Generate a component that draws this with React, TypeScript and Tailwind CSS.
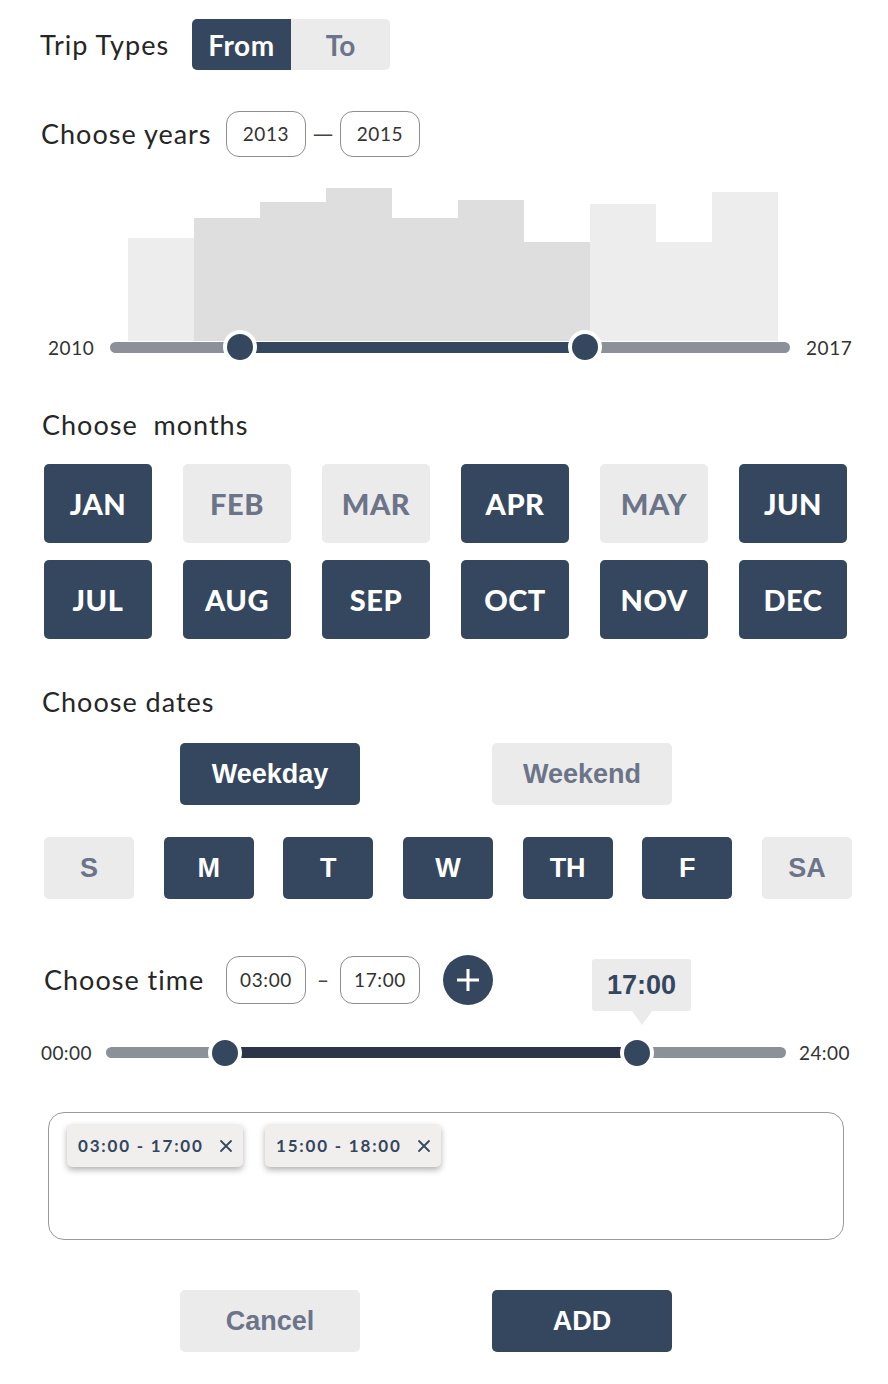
import React from "react";

const DARK = "bg-[#34475e]";

const bars = [
  { h: "h-[103px]", on: false, w: "w-[66px]" },
  { h: "h-[123px]", on: true, w: "w-[66px]" },
  { h: "h-[139px]", on: true, w: "w-[66px]" },
  { h: "h-[153px]", on: true, w: "w-[66px]" },
  { h: "h-[123px]", on: true, w: "w-[66px]" },
  { h: "h-[141px]", on: true, w: "w-[66px]" },
  { h: "h-[99px]", on: true, w: "w-[66px]" },
  { h: "h-[137px]", on: false, w: "w-[66px]" },
  { h: "h-[99px]", on: false, w: "w-[56px]" },
  { h: "h-[149px]", on: false, w: "w-[66px]" },
];

const months = [
  { m: "JAN", on: true },
  { m: "FEB", on: false },
  { m: "MAR", on: false },
  { m: "APR", on: true },
  { m: "MAY", on: false },
  { m: "JUN", on: true },
  { m: "JUL", on: true },
  { m: "AUG", on: true },
  { m: "SEP", on: true },
  { m: "OCT", on: true },
  { m: "NOV", on: true },
  { m: "DEC", on: true },
];

const days = [
  { d: "S", on: false },
  { d: "M", on: true },
  { d: "T", on: true },
  { d: "W", on: true },
  { d: "TH", on: true },
  { d: "F", on: true },
  { d: "SA", on: false },
];

const Label = ({ children, className = "" }: { children: React.ReactNode; className?: string }) => (
  <div className={`font-['Lato',sans-serif] text-[27px] tracking-[1px] leading-[32px] text-[#262626] ${className}`}>{children}</div>
);

const ValueBox = ({ v, h }: { v: string; h: string }) => (
  <div
    className={`w-[80px] ${h} rounded-[13px] border border-[#8e8e8e] flex items-center justify-center font-['Lato',sans-serif] text-[19px] text-[#333] tracking-[0.6px]`}
  >
    {v}
  </div>
);

const Handle = ({ pos }: { pos: string }) => (
  <div className={`absolute top-1/2 -translate-y-1/2 ${pos} w-[34px] h-[34px] rounded-full bg-white flex items-center justify-center`}>
    <div className={`w-[26px] h-[26px] rounded-full ${DARK}`} />
  </div>
);

const Btn = ({ text, on, size }: { text: string; on: boolean; size: string }) => (
  <div
    className={`${size} rounded-[5px] flex items-center justify-center font-['Liberation_Sans',Arial,sans-serif] font-bold text-[27px] ${
      on ? `${DARK} text-white` : "bg-[#ebebeb] text-[#6b7488]"
    }`}
  >
    {text}
  </div>
);

const Tag = ({ text }: { text: string }) => (
  <div className="h-[43px] w-[176px] rounded-[5px] bg-[#f1efee] shadow-[0_3px_6px_rgba(0,0,0,0.3)] flex items-center pl-[11px] gap-[15px]">
    <span className="font-['Lato',sans-serif] font-bold text-[17px] tracking-[1.8px] text-[#34475e]">{text}</span>
    <svg width="14" height="14" viewBox="0 0 14 14">
      <path d="M2 2 L12 12 M12 2 L2 12" stroke="#34475e" strokeWidth="1.8" strokeLinecap="round" />
    </svg>
  </div>
);

export default function App() {
  return (
    <div className="w-[888px] min-h-[1384px] bg-white flex flex-col">
      {/* trip types */}
      <div className="flex items-center pt-[19px] pl-[40px]">
        <Label className="w-[152px]">Trip Types</Label>
        <div className="flex h-[51px] rounded-[5px] overflow-hidden">
          <div className={`w-[99px] ${DARK} text-white flex items-center justify-center font-['Lato',sans-serif] font-bold text-[28px] tracking-[0.5px]`}>
            From
          </div>
          <div className="w-[99px] bg-[#ebebeb] text-[#6b7488] flex items-center justify-center font-['Lato',sans-serif] font-bold text-[28px]">
            To
          </div>
        </div>
      </div>

      {/* years */}
      <div className="flex items-center mt-[41px] pl-[41px]">
        <Label className="w-[185px]">Choose years</Label>
        <ValueBox v="2013" h="h-[46px]" />
        <div className="w-[34px] text-center text-[20px] text-[#444]">—</div>
        <ValueBox v="2015" h="h-[46px]" />
      </div>

      {/* histogram */}
      <div className="flex items-end ml-[128px] h-[153px] mt-[31px]">
        {bars.map((b, i) => (
          <div key={i} className={`${b.w} ${b.h} ${b.on ? "bg-[#dedede]" : "bg-[#ededed]"}`} />
        ))}
      </div>
      <div className="flex items-center h-[12px] pl-[48px]">
        <div className="w-[62px] font-['Lato',sans-serif] text-[19px] leading-none text-[#333] tracking-[0.6px]">2010</div>
        <div className="relative w-[680px] h-[11px] rounded-full bg-[#8b9099]">
          <div className={`absolute left-[130px] w-[345px] top-0 h-full ${DARK}`} />
          <Handle pos="left-[113px]" />
          <Handle pos="left-[458px]" />
        </div>
        <div className="ml-[16px] font-['Lato',sans-serif] text-[19px] leading-none text-[#333] tracking-[0.6px]">2017</div>
      </div>

      {/* months */}
      <Label className="mt-[56px] ml-[42px]">Choose&nbsp; months</Label>
      <div className="grid grid-cols-[repeat(6,108px)] gap-x-[31px] gap-y-[17px] ml-[44px] mt-[23px]">
        {months.map((m) => (
          <div
            key={m.m}
            className={`h-[79px] rounded-[5px] flex items-center justify-center font-['Lato',sans-serif] font-black text-[29px] tracking-[0.5px] ${
              m.on ? `${DARK} text-white` : "bg-[#ebebeb] text-[#6b7488]"
            }`}
          >
            {m.m}
          </div>
        ))}
      </div>

      {/* dates */}
      <Label className="mt-[47px] ml-[42px]">Choose dates</Label>
      <div className="flex gap-[132px] pl-[180px] mt-[25px]">
        <Btn text="Weekday" on size="w-[180px] h-[62px]" />
        <Btn text="Weekend" on={false} size="w-[180px] h-[62px]" />
      </div>
      <div className="flex justify-between w-[808px] ml-[44px] mt-[32px]">
        {days.map((d) => (
          <Btn key={d.d} text={d.d} on={d.on} size="w-[90px] h-[62px]" />
        ))}
      </div>

      {/* time */}
      <div className="flex items-center mt-[56px] pl-[44px]">
        <Label className="w-[182px]">Choose time</Label>
        <ValueBox v="03:00" h="h-[48px]" />
        <div className="w-[34px] text-center text-[20px] text-[#444]">–</div>
        <ValueBox v="17:00" h="h-[48px]" />
        <div className={`ml-[23px] w-[50px] h-[50px] rounded-full ${DARK} flex items-center justify-center`}>
          <svg width="24" height="24" viewBox="0 0 24 24">
            <path d="M12 1 V23 M1 12 H23" stroke="white" strokeWidth="3" />
          </svg>
        </div>
      </div>
      <div className="flex items-center h-[11px] pl-[41px] mt-[42px]">
        <div className="w-[65px] font-['Lato',sans-serif] text-[19px] leading-none text-[#333] tracking-[0.4px]">00:00</div>
        <div className="relative w-[680px] h-[11px] rounded-full bg-[#8b9099]">
          <div className="absolute left-[119px] w-[412px] top-0 h-full bg-[#2b3547]" />
          <Handle pos="left-[102px]" />
          <Handle pos="left-[514px]" />
          <div className="absolute left-[486px] top-[-88px] w-[99px] h-[52px] bg-[#ebebeb] rounded-[3px] flex items-center justify-center font-['Liberation_Sans',Arial,sans-serif] font-bold text-[27px] text-[#34475e]">
            17:00
            <div className="absolute left-[40px] top-[52px] w-0 h-0 border-l-[10px] border-r-[10px] border-t-[14px] border-l-transparent border-r-transparent border-t-[#ebebeb]" />
          </div>
        </div>
        <div className="ml-[13px] font-['Lato',sans-serif] text-[19px] leading-none text-[#333] tracking-[0.4px]">24:00</div>
      </div>

      {/* selected ranges */}
      <div className="ml-[48px] mt-[54px] w-[796px] h-[128px] rounded-[16px] border border-[#9a9a9a] flex items-start gap-[22px] pl-[18px] pt-[11px]">
        <Tag text="03:00 - 17:00" />
        <Tag text="15:00 - 18:00" />
      </div>

      {/* actions */}
      <div className="flex gap-[132px] pl-[180px] mt-[50px]">
        <Btn text="Cancel" on={false} size="w-[180px] h-[62px]" />
        <Btn text="ADD" on size="w-[180px] h-[62px]" />
      </div>
    </div>
  );
}
